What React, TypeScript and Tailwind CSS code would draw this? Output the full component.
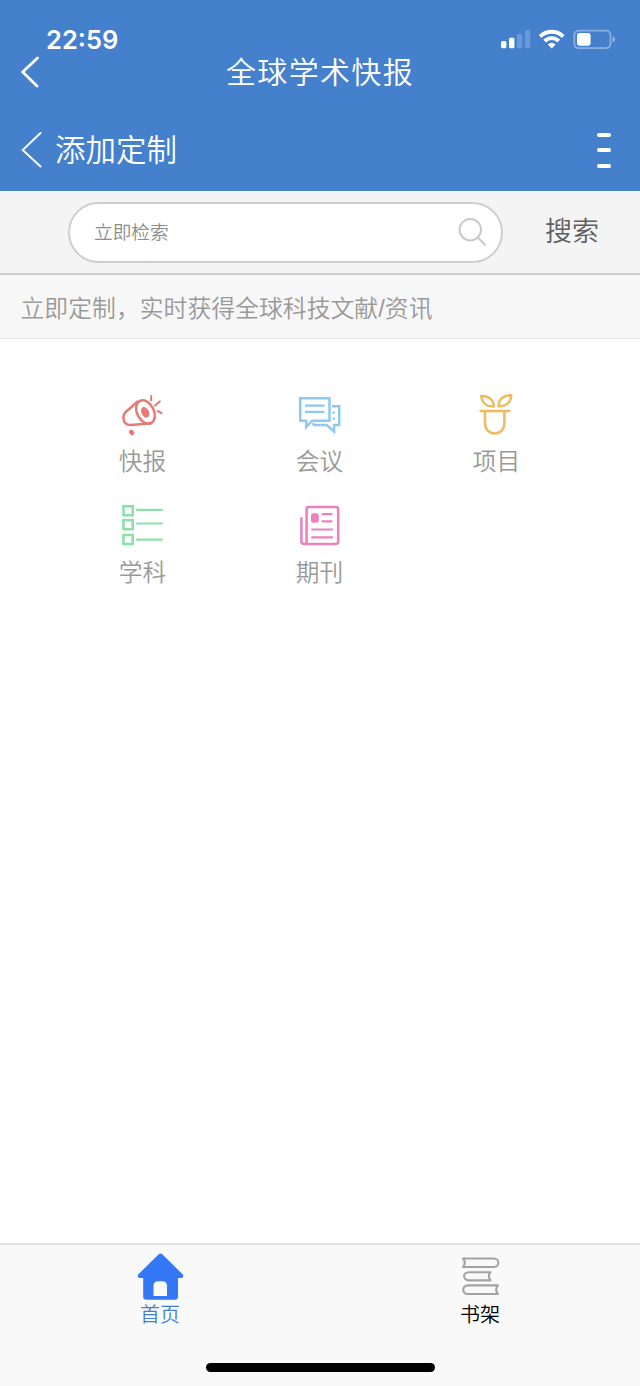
import type { ReactNode } from "react";

function StatusIcons() {
  return (
    <svg width="116" height="24" viewBox="500 27 116 24" fill="none">
      <rect x="501" y="41" width="5.4" height="7.3" rx="1.5" fill="#fff" />
      <rect x="509" y="37.7" width="5.4" height="10.6" rx="1.5" fill="#fff" />
      <rect x="517" y="33.7" width="5.2" height="14.6" rx="1.5" fill="#fff" opacity="0.2" />
      <rect x="525" y="30" width="5.2" height="18.3" rx="1.5" fill="#fff" opacity="0.2" />
      <g stroke="#fff" strokeWidth="3.9">
        <path d="M540.2 36.6a16.2 16.2 0 0 1 23 0" />
        <path d="M544.7 41.1a9.8 9.8 0 0 1 14 0" />
      </g>
      <path d="M547.800 44.400a5.500 5.500 0 0 1 7.800 0l-3.900 4z" fill="#fff" />
      <rect x="574.3" y="30.6" width="36.2" height="17.6" rx="4.5" stroke="#fff" strokeOpacity="0.38" strokeWidth="1.8" />
      <rect x="577" y="33.1" width="13.6" height="12.6" rx="2.4" fill="#fff" />
      <path d="M612.7 36.3q2.2 1 2.2 3.1t-2.2 3.1z" fill="#fff" opacity="0.45" />
    </svg>
  );
}

function Megaphone() {
  return (
    <svg width="46" height="44" viewBox="120 393 46 44" fill="none" stroke="#e67b76" strokeWidth="2.5" strokeLinecap="round" strokeLinejoin="round">
      <ellipse cx="145.5" cy="412" rx="8.4" ry="12.4" transform="rotate(-28 145.500 412)" />
      <path d="M137.500 401.500 125.400 412.200c-3 3-2.500 8.600.2 11.200 1.500 1.500 3.200 1.800 5.400 1.700l20.300-1.900" />
      <ellipse cx="145.2" cy="412.3" rx="2.5" ry="4.400" transform="rotate(-28 145.200 412.300)" fill="#e67b76" />
      <path d="m131.200 432 .9 1" strokeWidth="4.600" />
      <path d="m151.200 396-.1 4.200M155 405.600l4.800-4.200M157.600 411l4 2.100" strokeWidth="2" />
    </svg>
  );
}

function Chat() {
  return (
    <svg width="46" height="44" viewBox="297 393 46 44" fill="none" stroke="#8fc8f2" strokeWidth="2.5">
      <path d="M300.2 398.2h29.3v22.5h-17.3l-6 6.3v-6.3h-6z" />
      <path d="M305 405.7h19.6M305 411.800h19.600" strokeWidth="2.200" />
      <path d="M332 406.200h7.200V425h-5.100v6.500l-7.500-6.500h-12.500l-1.500-2.100" />
      <path d="M332.600 412.600h2.400M332.600 418.600h2.400" strokeWidth="2.400" />
    </svg>
  );
}

function Plant() {
  return (
    <svg width="46" height="44" viewBox="474 393 46 44" fill="none" stroke="#edbc5e" strokeWidth="2.500">
      <path d="M481.300 396c7.200-.2 12.400 3.200 12.400 10.500-7 .4-11.800-3.300-12.400-10.500zM511.200 395.300c-7.600-.2-12.600 3.800-12.700 11 7.200.3 12.700-3.700 12.700-11z" strokeLinejoin="round" />
      <path d="M479.600 411h30.800" strokeWidth="2.600" />
      <path d="M485 411.500v12.200a9.700 9.700 0 0 0 19.400 0v-12.200" />
    </svg>
  );
}

function ListIcon() {
  return (
    <svg width="46" height="44" viewBox="120 504 46 44" fill="none" stroke="#8de1a8" strokeWidth="2.600">
      <path d="M123.500 506.300h9.200v8.900h-9.200zM123.500 520.200h9.200v9h-9.200zM123.500 535h9.200v9h-9.200z" />
      <path d="M136.200 509.900h26.600M136.200 523.500h26.600M136.200 539.700h26.600" strokeWidth="2.200" />
    </svg>
  );
}

function Journal() {
  return (
    <svg width="46" height="44" viewBox="297 504 46 44" fill="none" stroke="#ea81bf" strokeWidth="2.500" strokeLinecap="round">
      <path d="M301.400 518.300v23q0 2.800 2.800 2.800h31.500q2.500 0 2.500-2.500v-32.300q0-2.200-2.300-2.200h-27.100q-2.200 0-2.200 2.200v32.600q0 2-2 2.200" />
      <rect x="311" y="513.200" width="7.800" height="9.500" rx="2.500" fill="#ea81bf" stroke="none" />
      <path d="M322.600 514.200h8.900M322.600 521.300h8.900M312.200 529.500h20M312.200 537.400h20" strokeWidth="2.200" />
    </svg>
  );
}

function Home() {
  return (
    <svg width="48" height="48" viewBox="136 1253 48 48">
      <path fillRule="evenodd" fill="#3478f6" d="M159 1254q1.500-1.200 3 0l20.800 20.500q1.500 3-1.500 3.500h-3.300v18.500q0 3.200-3.200 3.200h-28.400q-3.200 0-3.200-3.200v-18.500h-3.500q-3-.5-1.500-3.500zM153.500 1296h13.500v-10q0-4.800-4.800-4.800h-4q-4.700 0-4.700 4.800z" />
    </svg>
  );
}

function Books() {
  return (
    <svg width="42" height="48" viewBox="459 1253 42 48" fill="none" stroke="#a3a3a3" strokeWidth="2.100" strokeLinejoin="round">
      <path d="M463 1258.500h30.500c6.500 0 6.500 8.500 0 8.500H463c2.500-2.900 2.500-5.600 0-8.500z" />
      <path d="M490.500 1272.200h-21.700c-6.200 0-6.200 8.200 0 8.200h21.700c-2.200-2.800-2.200-5.400 0-8.200z" />
      <path d="M498 1285.400h-30c-6.300 0-6.300 8.600 0 8.600h30c-2.500-2.900-2.500-5.700 0-8.600z" />
    </svg>
  );
}

function Category({ icon, label }: { icon: ReactNode; label: string }) {
  return (
    <button className="flex h-[111px] flex-col items-center">
      {icon}
      <span className="mt-[11px] text-[23.700px] leading-6 text-[#999]">{label}</span>
    </button>
  );
}

export default function App() {
  return (
    <div className="flex h-[1386px] w-[640px] flex-col overflow-hidden bg-white font-['Noto_Sans_CJK_SC',sans-serif] font-[350]">
      <header className="flex h-[191px] flex-col bg-[#4580cd] text-white">
        <div className="flex h-[51px] items-end justify-between pr-[24px] pl-[46px]">
          <time className="font-[Inter,sans-serif] text-[25.500px] leading-[22px] font-semibold">22:59</time>
          <StatusIcons />
        </div>
        <div className="flex h-[42px] items-center">
          <button aria-label="返回" className="flex w-[60px] pl-[19px]">
            <svg width="22" height="34" viewBox="19 55 22 34" fill="none" stroke="#fff" strokeWidth="2.800" strokeLinecap="round">
              <path d="M37.500 58 22.700 72l14.300 14" />
            </svg>
          </button>
          <h1 className="flex-1 pb-[4px] text-center text-[30px] leading-[38px] tracking-[1.350px]">全球学术快报</h1>
          <span className="w-[60px]" />
        </div>
        <div className="mt-[16px] flex h-[82px] items-center">
          <button aria-label="上一页" className="pl-[20px]">
            <svg width="24" height="38" viewBox="20 131 24 38" fill="none" stroke="#fff" strokeWidth="1.900" strokeLinecap="round">
              <path d="M40.500 133 22.700 150l17.800 16.500" />
            </svg>
          </button>
          <h2 className="ml-[11px] flex-1 pb-[4px] text-[30.500px] leading-10">添加定制</h2>
          <button aria-label="菜单" className="mr-[29px] flex flex-col gap-[11.500px]">
            <span className="h-[4px] w-[14px] rounded-full bg-white" />
            <span className="h-[4px] w-[14px] rounded-full bg-white" />
            <span className="h-[4px] w-[14px] rounded-full bg-white" />
          </button>
        </div>
      </header>

      <div className="flex h-[84px] items-start border-b-2 border-[#cecece] bg-[#f4f4f4] pt-[11px] pl-[68px]">
        <div className="flex h-[61px] w-[435px] items-center justify-between rounded-full border-2 border-[#cecece] bg-white pr-[14px] pl-[24px]">
          <span className="pb-[3px] text-[18.700px] leading-6 text-[#8c8c8c]">立即检索</span>
          <svg width="30" height="30" viewBox="457 218 30 30" fill="none" stroke="#c9c9c9" strokeWidth="2" strokeLinecap="round">
            <circle cx="470.300" cy="229.700" r="10.700" />
            <path d="m478.300 238 6.700 6.700" />
          </svg>
        </div>
        <button className="ml-[42px] h-[57px] text-[27px] text-[#5f5f5f]">搜索</button>
      </div>

      <p className="h-[64px] border-b border-[#e6e6e6] bg-[#f7f7f7] pl-[20.500px] text-[23.850px] leading-[63px] text-[#999]">
        立即定制，实时获得全球科技文献<span className="font-['Liberation_Sans',sans-serif]">/</span>资讯
      </p>

      <main className="grid flex-1 grid-cols-[177px_177px_177px] content-start pt-[54px] pl-[54px]">
        <Category icon={<Megaphone />} label="快报" />
        <Category icon={<Chat />} label="会议" />
        <Category icon={<Plant />} label="项目" />
        <Category icon={<ListIcon />} label="学科" />
        <Category icon={<Journal />} label="期刊" />
      </main>

      <footer className="flex h-[143px] flex-col items-center border-t-2 border-[#e2e2e2] bg-[#f9f9f9]">
        <nav className="grid h-[118px] w-full grid-cols-2 pt-[8px]">
          <button className="flex flex-col items-center text-[20px] leading-[26px] text-[#4580cd]">
            <Home />
            <span>首页</span>
          </button>
          <button className="flex flex-col items-center text-[20px] leading-[26px] text-black">
            <Books />
            <span>书架</span>
          </button>
        </nav>
        <div className="h-[9px] w-[229px] rounded-full bg-black" />
      </footer>
    </div>
  );
}
